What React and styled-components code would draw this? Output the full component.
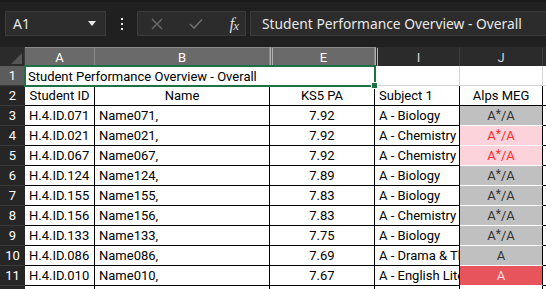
import React from 'react';
import styled, { createGlobalStyle } from 'styled-components';

const Global = createGlobalStyle`
  html, body { margin: 0; padding: 0; background: #1f1f1f; }
  body { width: 546px; height: 289px; overflow: hidden; }
`;

const Root = styled.div`
  width: 546px;
  height: 289px;
  background: #1f1f1f;
  overflow: hidden;
  display: flex;
  flex-direction: column;
`;

const Toolbar = styled.div`
  flex: 0 0 47px;
  height: 47px;
  box-sizing: border-box;
  padding: 9px 0 0 5px;
  display: flex;
  align-items: flex-start;
  background: #202020;
  border-top: 2px solid #1a1a1a;
`;

const Box = styled.div`
  height: 25px;
  box-sizing: border-box;
  background: #2c2c2c;
  border: 1px solid #3c3c3c;
  display: flex;
  align-items: center;
  font-family: "Noto Sans", "Open Sans", sans-serif;
  color: #e6e6e6;
`;

const NameBox = styled(Box)`
  width: 101px;
  padding: 0 7px 0 7px;
  justify-content: space-between;
  font-size: 14px;
`;

const Caret = styled.span`
  width: 0;
  height: 0;
  border-left: 4px solid transparent;
  border-right: 4px solid transparent;
  border-top: 5px solid #e8e8e8;
  margin-right: 2px;
`;

const Dots = styled.div`
  width: 31px;
  height: 25px;
  display: flex;
  flex-direction: column;
  align-items: center;
  justify-content: center;
  gap: 3px;
  & > span {
    width: 2px;
    height: 2px;
    background: #e6e6e6;
  }
`;

const FxGroup = styled(Box)`
  width: 109px;
  padding: 0 7px 0 13px;
  justify-content: space-between;
`;

const FxText = styled.span`
  font-family: "Liberation Serif", serif;
  font-style: italic;
  font-size: 17px;
  line-height: 1;
  color: #d8d8d8;
  letter-spacing: -1px;
  & sub { font-size: 13px; vertical-align: -1px; }
`;

const FormulaBox = styled(Box)`
  flex: 1;
  margin-left: 4px;
  margin-right: -10px;
  padding-left: 11px;
  font-size: 13.8px;
  color: #e8e8e8;
`;

const Sheet = styled.div`
  flex: 0 0 auto;
  display: grid;
  grid-template-columns: 25px 70px 175px 105px 85px 83px 1fr;
  grid-auto-rows: 20px;
  grid-template-rows: 19px;
  font-family: Roboto, "Liberation Sans", sans-serif;
`;

const Corner = styled.div`
  position: relative;
  background: #2b2b2b;
  border-right: 1px solid #3a3a3a;
  &::after {
    content: '';
    position: absolute;
    right: 2px;
    bottom: 2px;
    width: 0;
    height: 0;
    border-left: 11px solid transparent;
    border-bottom: 11px solid #555;
  }
`;

const ColHead = styled.div`
  box-sizing: border-box;
  display: flex;
  align-items: center;
  justify-content: center;
  font-size: 13px;
  background: ${p => (p.$sel ? '#6a6a6a' : '#2b2b2b')};
  color: ${p => (p.$sel ? '#ffffff' : '#d6d6d6')};
  border-right: 1px solid ${p => (p.$sel ? '#8a8a8a' : '#3e3e3e')};
  border-left: ${p => (p.$hidden ? '3px double #b0b0b0' : 'none')};
  border-top: 1px solid ${p => (p.$sel ? '#8a8a8a' : '#2b2b2b')};
`;

const RowHead = styled.div`
  box-sizing: border-box;
  display: flex;
  align-items: center;
  justify-content: center;
  font-size: 13px;
  background: ${p => (p.$sel ? '#5c5c5c' : '#262626')};
  color: #ffffff;
  border-bottom: 1px solid #3a3a3a;
`;

const Cell = styled.div`
  box-sizing: border-box;
  background: ${p => p.$fill || '#ffffff'};
  border-right: 1px solid ${p => p.$line || '#000'};
  border-bottom: 1px solid ${p => p.$hline || p.$line || '#000'};
  display: flex;
  align-items: center;
  justify-content: ${p => (p.$center ? 'center' : 'flex-start')};
  padding: 0 ${p => (p.$center ? '0' : '4px')};
  font-size: 13px;
  font-weight: 400;
  color: ${p => p.$color || '#000'};
  white-space: nowrap;
  overflow: hidden;
`;

const TitleCell = styled(Cell)`
  grid-column: span 3;
  position: relative;
  overflow: visible;
  border: none;
  padding-left: 3px;
`;

const Star = styled.span`
  position: relative;
  top: -2px;
  font-size: 12px;
`;

const Selection = styled.div`
  position: absolute;
  left: -1px;
  top: -1px;
  right: -1px;
  bottom: -1px;
  border: 2px solid #1e7145;
  pointer-events: none;
`;

const Handle = styled.div`
  position: absolute;
  right: -4px;
  bottom: -4px;
  width: 5px;
  height: 5px;
  background: #1e7145;
  border: 1px solid #ffffff;
`;

const fills = {
  gray: { fill: '#c0c0c0', color: '#333333', line: '#ffffff' },
  pink: { fill: '#fcd3da', color: '#ff2a2a', line: '#ffffff' },
  red: { fill: '#e8545c', color: '#ffdfe1', line: '#ffffff' },
};

const rows = [
  ['H.4.ID.071', 'Name071,', '7.92', 'A - Biology', true, 'gray'],
  ['H.4.ID.021', 'Name021,', '7.92', 'A - Chemistry', true, 'pink'],
  ['H.4.ID.067', 'Name067,', '7.92', 'A - Chemistry', true, 'pink'],
  ['H.4.ID.124', 'Name124,', '7.89', 'A - Biology', true, 'gray'],
  ['H.4.ID.155', 'Name155,', '7.83', 'A - Biology', true, 'gray'],
  ['H.4.ID.156', 'Name156,', '7.83', 'A - Chemistry', true, 'gray'],
  ['H.4.ID.133', 'Name133,', '7.75', 'A - Biology', true, 'gray'],
  ['H.4.ID.086', 'Name086,', '7.69', 'A - Drama & Theatre', false, 'gray'],
  ['H.4.ID.010', 'Name010,', '7.67', 'A - English Literature', false, 'red'],
];

export default function App() {
  return (
    <Root>
      <Global />
      <Toolbar>
        <NameBox>
          <span>A1</span>
          <Caret />
        </NameBox>
        <Dots>
          <span />
          <span />
          <span />
        </Dots>
        <FxGroup>
          <svg width="12" height="12" viewBox="0 0 12 12">
            <path d="M1 1 L11 11 M11 1 L1 11" stroke="#6c6c6c" strokeWidth="1.4" fill="none" />
          </svg>
          <svg width="14" height="12" viewBox="0 0 14 12">
            <path d="M1 6 L5 10 L13 1.5" stroke="#6c6c6c" strokeWidth="1.6" fill="none" />
          </svg>
          <FxText>
            f<sub>x</sub>
          </FxText>
        </FxGroup>
        <FormulaBox>Student Performance Overview - Overall</FormulaBox>
      </Toolbar>
      <Sheet>
        <Corner />
        <ColHead $sel>A</ColHead>
        <ColHead $sel>B</ColHead>
        <ColHead $sel $hidden>E</ColHead>
        <ColHead $hidden>I</ColHead>
        <ColHead>J</ColHead>
        <ColHead />

        <RowHead $sel>1</RowHead>
        <TitleCell>
          Student Performance Overview - Overall
          <Selection>
            <Handle />
          </Selection>
        </TitleCell>
        <Cell $line="#d4d4d4" />
        <Cell $line="#d4d4d4" />
        <Cell $line="#d4d4d4" />

        <RowHead>2</RowHead>
        <Cell $center>Student ID</Cell>
        <Cell $center>Name</Cell>
        <Cell $center>KS5 PA</Cell>
        <Cell>Subject 1</Cell>
        <Cell $center>Alps MEG</Cell>
        <Cell />

        {rows.map((r, i) => {
          const f = fills[r[5]];
          return (
            <React.Fragment key={r[0]}>
              <RowHead>{i + 3}</RowHead>
              <Cell>{r[0]}</Cell>
              <Cell>{r[1]}</Cell>
              <Cell $center>{r[2]}</Cell>
              <Cell>{r[3]}</Cell>
              <Cell $center $fill={f.fill} $color={f.color} $hline={f.line}>
                {r[4] ? (
                  <span>
                    A<Star>*</Star>/A
                  </span>
                ) : (
                  'A'
                )}
              </Cell>
              <Cell />
            </React.Fragment>
          );
        })}
        <RowHead>12</RowHead>
        <Cell />
        <Cell />
        <Cell />
        <Cell />
        <Cell />
        <Cell />
      </Sheet>
    </Root>
  );
}
